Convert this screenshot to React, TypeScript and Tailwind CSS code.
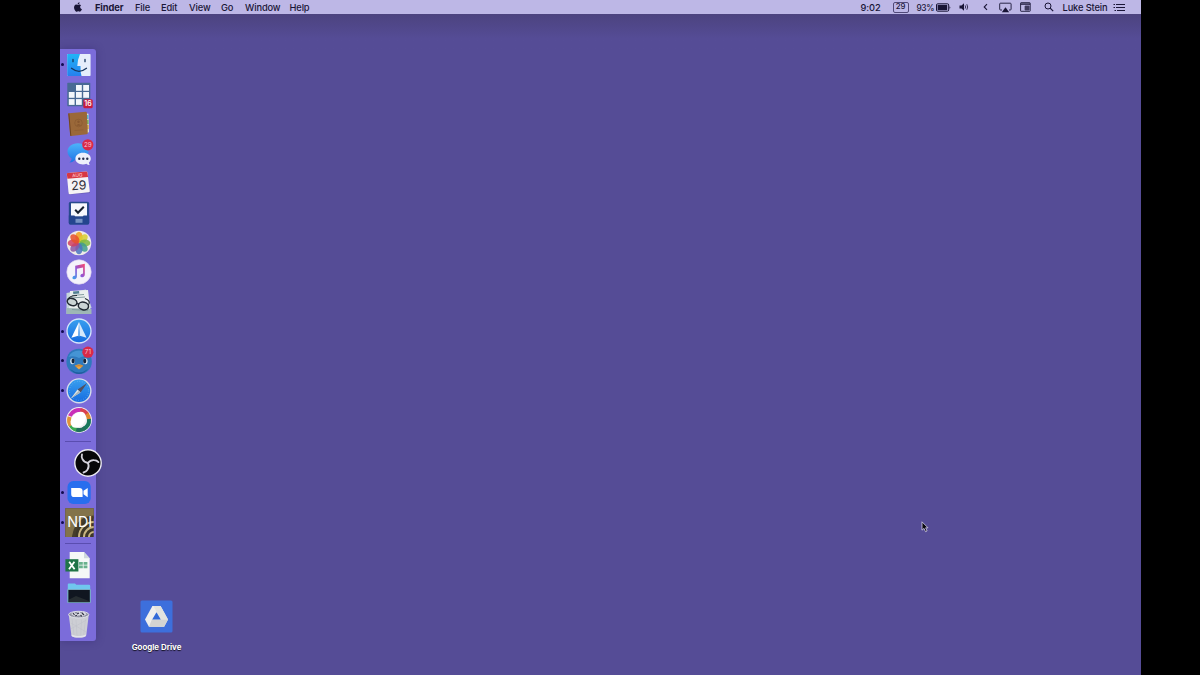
import type { ReactNode } from "react";

const FONT = "font-['Inter','Liberation_Sans',sans-serif]";

function Tile({ children, running = false }: { children: ReactNode; running?: boolean }) {
  return (
    <div className="flex h-[29.6px] shrink-0 items-center">
      <div className="flex w-1 shrink-0 justify-end">
        {running && <span className="h-[3px] w-[3px] shrink-0 rounded-full bg-[#100a50]" />}
      </div>
      <svg viewBox="0 0 30 30" className="h-[30px] w-[30px] shrink-0 overflow-visible font-['Inter',sans-serif]">
        {children}
      </svg>
    </div>
  );
}

function Divider() {
  return (
    <div className="flex h-[13.2px] shrink-0 items-center pl-[5px]">
      <div className="h-px w-[26px] bg-[#5a4db0]" />
    </div>
  );
}

function Badge({ x, y, label }: { x: number; y: number; label: string }) {
  return (
    <g>
      <circle cx={x} cy={y} r="5.6" fill="#d92a48" />
      <text x={x} y={y + 2.2} fontSize="6.3" textAnchor="middle" fill="#f6c3d3">{label}</text>
    </g>
  );
}

const petals = ["#f2a01d", "#d9cf2f", "#7cb83f", "#3f9e8e", "#4a74c0", "#8a57a6", "#d0405f", "#e8502a"];

function Dock() {
  return (
    <div className="flex h-[592px] w-9 flex-col rounded-r-[3px] bg-[#7b6cda] pt-[1.2px] shadow-[0_0_9px_rgba(45,35,110,0.4)]">
      <Tile running>
        <defs>
          <linearGradient id="finder" x1="0" y1="0" x2="0" y2="1">
            <stop offset="0" stopColor="#21b4f7" />
            <stop offset="1" stopColor="#2580ee" />
          </linearGradient>
        </defs>
        <rect x="3.2" y="4" width="23.4" height="22" rx="0.8" fill="#e6eefb" />
        <path d="M4 4H16Q13.4 10 13.3 16H16.5Q16.3 22 17.5 26H4Q3.2 26 3.2 25.2V4.8Q3.2 4 4 4Z" fill="url(#finder)" />
        <path d="M9 9.5v2.2M21 9.5v2.2M7.5 18.3Q15 24.3 22.5 18.3" fill="none" stroke="#17375f" strokeWidth="1.3" strokeLinecap="round" />
      </Tile>
      <Tile>
        <rect x="3.3" y="2.8" width="23" height="23.4" rx="0.6" fill="#486a94" />
        <g fill="#f2f7fb">
          <rect x="12" y="5" width="5.8" height="5.8" /><rect x="19.2" y="5" width="5.8" height="5.8" />
          <rect x="4.8" y="12" width="5.8" height="5.8" /><rect x="12" y="12" width="5.8" height="5.8" /><rect x="19.2" y="12" width="5.8" height="5.8" />
          <rect x="4.8" y="19.1" width="5.8" height="5.8" /><rect x="12" y="19.1" width="5.8" height="5.8" />
        </g>
        <rect x="19.3" y="19.3" width="9.4" height="9" rx="1.5" fill="#c91b3e" />
        <text x="24" y="26.3" fontSize="7" fontWeight="600" textAnchor="middle" fill="#fff">16</text>
      </Tile>
      <Tile>
        <path d="M20 4L24.5 4.8 25 23 22 25Z" fill="#dfe0c8" />
        <path d="M22 6h2.5v4H22Z" fill="#58b6d5" /><path d="M22 11h2.7v4H22Z" fill="#78bd65" /><path d="M22 16h2.8v4H22Z" fill="#d7b052" />
        <path d="M5 4.2L21.8 2.8Q22.8 2.8 22.9 3.7L23.8 24Q23.8 25 22.8 25.2L7.2 27Q6.2 27 6.1 26L4.3 5.2Q4.3 4.3 5 4.2Z" fill="#9a6839" />
        <path d="M4.8 4.4L6.8 26.9" stroke="#704522" strokeWidth="1" />
        <circle cx="14.5" cy="14" r="3.8" fill="none" stroke="#87572f" strokeWidth="0.6" />
        <circle cx="14.5" cy="12.8" r="1.2" fill="#87572f" /><path d="M12.2 16.7Q14.5 13.5 16.9 16.7Z" fill="#87572f" />
        <path d="M10.5 21.5L19.5 20.8" stroke="#87572f" strokeWidth="0.5" />
      </Tile>
      <Tile>
        <defs>
          <linearGradient id="bubble" x1="0" y1="0" x2="0" y2="1">
            <stop offset="0" stopColor="#4db4fa" />
            <stop offset="1" stopColor="#1d73e6" />
          </linearGradient>
        </defs>
        <path d="M14 4.2C7.5 4.2 3.5 8 3.5 12.5C3.5 15.6 5.2 18 7.6 19.4C7.4 21.4 6.3 22.8 5.3 23.6C8 23.5 10 22.4 11.2 20.8C19 21.6 24.5 18 24.5 12.5C24.5 8 20 4.2 14 4.2Z" fill="url(#bubble)" />
        <path d="M19 13.8C14.5 13.8 11.4 16.4 11.4 19.7C11.4 23 14.7 25.4 19 25.4C20.2 25.4 21.4 25.2 22.4 24.8Q23.9 26.3 25.8 26.1Q24.9 25 24.9 23.5C26.1 22.5 26.8 21.2 26.8 19.7C26.8 16.4 23.5 13.8 19 13.8Z" fill="#edf0fb" />
        <circle cx="15.3" cy="19.8" r="1.2" fill="#28304e" /><circle cx="19.3" cy="19.8" r="1.2" fill="#28304e" /><circle cx="23.3" cy="19.8" r="1.2" fill="#28304e" />
        <Badge x={23.8} y={5.8} label="29" />
      </Tile>
      <Tile>
        <path d="M4 24L25.5 22 26 25 5 26.5Z" fill="#55498e" opacity=".5" />
        <path d="M2.8 5.9Q2.8 5 3.8 4.9L22.2 3.5Q23.2 3.5 23.4 4.5L25.8 23Q25.8 24.2 24.8 24.3L5.8 26.2Q4.7 26.2 4.6 25.2Z" fill="#f5f3f5" />
        <path d="M2.8 5.9Q2.8 5 3.8 4.9L22.2 3.5Q23.2 3.5 23.4 4.5L24.1 9 3.4 10.7Z" fill="#d63743" />
        <text x="13.3" y="9" fontSize="4.8" fontWeight="500" textAnchor="middle" fill="#ffc6cc" transform="rotate(-4 13 8)">AUG</text>
        <text x="14.8" y="21.7" fontSize="12.4" textAnchor="middle" fill="#33313c" transform="rotate(-4 14 17)">29</text>
      </Tile>
      <Tile>
        <rect x="4.8" y="3.7" width="20.4" height="22.8" rx="1.8" fill="#284a8d" />
        <rect x="7" y="5.3" width="16" height="13" fill="#f7f8fc" />
        <path d="M4.8 17.5H10.5Q11 20 15 20T19.5 17.5H25.2V25Q25.2 26.5 23.7 26.5H6.3Q4.8 26.5 4.8 25Z" fill="#24458e" />
        <path d="M11.5 20.8h7v4h-7Z" fill="#7692c3" />
        <path d="M11.2 11.8L14 14.8 19.8 8.8" fill="none" stroke="#18212f" strokeWidth="2" />
      </Tile>
      <Tile>
        <circle cx="15" cy="15" r="12.3" fill="#eeeae8" />
        {petals.map((color, i) => (
          <ellipse key={color} cx="15" cy="9.2" rx="3.6" ry="5.5" fill={color} opacity="0.85" transform={`rotate(${i * 45} 15 15)`} />
        ))}
      </Tile>
      <Tile>
        <defs>
          <linearGradient id="note" x1="1" y1="0" x2="0" y2="1">
            <stop offset="0" stopColor="#fb4668" />
            <stop offset=".5" stopColor="#9456d5" />
            <stop offset="1" stopColor="#35a8ef" />
          </linearGradient>
        </defs>
        <circle cx="15" cy="15" r="12.2" fill="#f5f3fb" stroke="#ddd3ef" strokeWidth=".7" />
        <path d="M11.2 8.7L20.8 6.8V17.3Q20.8 20 18.3 20.2Q16.3 20.3 16.3 18.7Q16.3 17 19.1 16.5V10.5L12.9 11.8V19.3Q12.9 22 10.4 22.2Q8.4 22.3 8.4 20.7Q8.4 19 11.2 18.5Z" fill="url(#note)" />
      </Tile>
      <Tile>
        <path d="M2.5 6L22 2.5 27.6 21 2.5 27Z" fill="#c4d6da" />
        <path d="M6 4L24 3 26.5 24 5 22Z" fill="#e9eeee" />
        <path d="M2.5 21L27.5 22V27H2.5Z" fill="#9eb7b5" />
        <path d="M8 8.5l12-1M7 11l14-1M8 22.5l16 1" stroke="#839b9f" strokeWidth="1" />
        <path d="M9 4.5l6-.5.3 2.5-6 .5Z" fill="#517f91" />
        <g fill="#becacb" fillOpacity=".7" stroke="#212932" strokeWidth="1.5">
          <ellipse cx="8.1" cy="15" rx="5" ry="3.5" transform="rotate(20 8.1 15)" />
          <ellipse cx="19.4" cy="19" rx="5.2" ry="3.8" transform="rotate(12 19.4 19)" />
        </g>
        <path d="M12.8 16.8Q14 16 14.8 17.5M4 12.2Q6 8.5 13 8.5M24.3 18Q27.5 14 21 11.5" fill="none" stroke="#212932" strokeWidth="1.2" />
      </Tile>
      <Tile running>
        <defs>
          <linearGradient id="sky" x1="0" y1="0" x2="0" y2="1">
            <stop offset="0" stopColor="#39a0ef" />
            <stop offset="1" stopColor="#156be0" />
          </linearGradient>
        </defs>
        <circle cx="15" cy="15" r="12" fill="url(#sky)" stroke="#d5e5fb" strokeWidth="1.3" />
        <path d="M15 6L22.6 21.8 15.8 19.8Z" fill="#d5e8fb" /><path d="M15 6L7.4 21.8 14.2 19.8Z" fill="#fff" />
        <path d="M14.1 19.8L15 13 15.9 19.8 15 20.8Z" fill="#78b3ef" />
      </Tile>
      <Tile running>
        <path d="M15 2.8C7.5 2.8 2.4 8 2.4 15.7C2.4 23 7.4 28 15 28C22.7 28 27.8 22.8 27.8 15.7C27.8 8 22.6 2.8 15 2.8Z" fill="#2f79bd" />
        <path d="M4.5 11Q7.5 4.5 15 4.5Q22 4.5 25.5 11Q20 9 15 12Q10 9 4.5 11Z" fill="#4594d4" />
        <path d="M6 23Q15 30 24 23Q20 28 15 28T6 23Z" fill="#1f5c9f" />
        <ellipse cx="8.5" cy="15.2" rx="2.3" ry="3" fill="#d6e6f3" /><ellipse cx="21.3" cy="15.2" rx="2.3" ry="3" fill="#d6e6f3" />
        <ellipse cx="9.1" cy="15" rx="1.6" ry="2.4" fill="#12243c" /><ellipse cx="20.7" cy="15" rx="1.6" ry="2.4" fill="#12243c" />
        <path d="M10.7 19.8Q15 16.8 19.3 19.8L15 23.4Z" fill="#eca543" /><path d="M11.3 20.2Q15 19.2 18.8 20.2" stroke="#a9682a" fill="none" strokeWidth=".7" />
        <Badge x={23.9} y={6.2} label="71" />
      </Tile>
      <Tile running>
        <circle cx="15" cy="14.8" r="11.9" fill="url(#sky)" stroke="#d6dcea" strokeWidth="1.4" />
        <circle cx="15" cy="14.8" r="9.5" fill="none" stroke="#7eb9ee" strokeWidth="1" strokeDasharray=".5 2" />
        <path d="M23.2 7L16.5 16.4 13.6 13.4Z" fill="#53505f" /><path d="M6.8 22.6L13.6 13.4 16.5 16.4Z" fill="#dfe5e4" />
        <path d="M6.8 22.6L15 14.8 16.5 16.4Z" fill="#a8b6bb" />
      </Tile>
      <Tile>
        <circle cx="15" cy="15" r="12.9" fill="#f0eff3" />
        <g transform="translate(.3 0)" fill="none" strokeWidth="4">
          <path d="M5.5 11A10 10 0 0 1 18 5.6" stroke="#c92eb8" />
          <path d="M16 5.1A10 10 0 0 1 23.2 9.8" stroke="#d9414e" />
          <path d="M22.5 8.7A10 10 0 0 1 24.7 15" stroke="#e0882e" />
          <path d="M24.7 14A10 10 0 0 1 19 24" stroke="#18775b" />
          <path d="M20.5 23.2A10 10 0 0 1 10 23.8" stroke="#21705a" />
          <path d="M12 24.6A10 10 0 0 1 5.7 19" stroke="#3dac53" />
          <path d="M6.5 20.6A10 10 0 0 1 5.3 11.8" stroke="#e0923a" />
        </g>
        <ellipse cx="14.2" cy="14.8" rx="9" ry="6.5" fill="#fff" transform="rotate(-48 14.2 14.8)" />
      </Tile>
      <Divider />
      <Tile>
        <circle cx="24" cy="15" r="13.2" fill="#070708" stroke="#eceaf3" strokeWidth="1.4" />
        <g fill="none" stroke="#d4d2db" strokeWidth="1.8" strokeLinecap="round">
          {[0, 120, 240].map((angle) => (
            <path key={angle} d="M24 15Q20 14.5 18.5 11.2Q17.2 8.8 18 6.4" transform={`rotate(${angle} 24 15)`} />
          ))}
        </g>
      </Tile>
      <Tile running>
        <rect x="3.5" y="4" width="23.2" height="23" rx="5.8" fill="#286eee" />
        <path d="M7.2 11H15.3Q18.6 11 18.6 14.2V20.1H10.4Q7.2 20.1 7.2 16.9ZM19.5 13.8L23.7 10.9V20.2L19.5 17.2Z" fill="#fff" />
      </Tile>
      <Tile running>
        <defs><clipPath id="square"><rect x="1.3" y="1.3" width="28.4" height="28.7" /></clipPath></defs>
        <g clipPath="url(#square)">
          <rect x="1" y="1" width="29" height="29" fill="#3d3728" />
          <path d="M1 1H30V10Q12 12 8 30H1Z" fill="#83734a" />
          <g fill="none" stroke="#c8b582" strokeWidth="2">
            <circle cx="30" cy="30" r="5" /><circle cx="30" cy="30" r="10" />
            <circle cx="30" cy="30" r="15" /><circle cx="30" cy="30" r="20" stroke="#453d2a" strokeWidth="3" />
          </g>
        </g>
        <text x="3.2" y="19.6" fontSize="14" textLength="25" lengthAdjust="spacingAndGlyphs" fill="#fff">NDI</text>
      </Tile>
      <Divider />
      <Tile>
        <path d="M5.7 2H20L25.7 8.2V28.3H5.7Z" fill="#f5f8f7" /><path d="M20 2V8.2H25.7Z" fill="#cfd7dc" />
        <g fill="#6ab28e"><path d="M15 12h3.8v2.7H15ZM19.6 12h3.8v2.7h-3.8ZM15 15.5h3.8v2.7H15ZM19.6 15.5h3.8v2.7h-3.8Z" /></g>
        <rect x="1.4" y="9.2" width="13" height="12.3" fill="#207447" />
        <path d="M5.2 11.8L10.6 19.2M10.4 11.8L5 19.2" stroke="#fff" strokeWidth="1.8" />
      </Tile>
      <Tile>
        <path d="M3.8 8V5.3Q3.8 4.5 4.7 4.5H11L12.3 5.8H25Q26.2 5.8 26.2 6.8V20H3.8Z" fill="#70c7ee" />
        <rect x="3.2" y="10" width="23.7" height="14" rx=".8" fill="#78adc4" />
        <rect x="4.4" y="11" width="21.4" height="12.2" fill="#101620" />
        <path d="M5 20.5L12 17 25 22V23H5Z" fill="#252c30" />
      </Tile>
      <Tile>
        <path d="M4.7 5.5H24.8L22.3 26.3Q22 28.6 14.8 28.6T7.4 26.3Z" fill="#cdced4" />
        <ellipse cx="14.7" cy="5.6" rx="10.1" ry="3.3" fill="#8f91a0" stroke="#e7e6ee" strokeWidth=".9" />
        <path d="M7 5L10 2.5 12 5 15 2 17 4.6 20 2.5 22.5 5.3 19 7.6 15 6.2 11 7.8Z" fill="#dcdce5" />
        <path d="M9 4l1.5 2M13 5l2-1M18 4l2 2M11 7l2-.8M16.5 6l1.3 1.3" stroke="#343444" strokeWidth="1.2" />
        <path d="M8 10L10 26M12 10.5L13 27M17.5 10.5L16.7 27M21.5 10L19.7 26M7 14L22 23M6.7 20L22.5 11" stroke="#bfc0c8" strokeWidth=".5" />
        <path d="M7.6 25.4Q14.8 28.5 22 25.4L21.8 27Q20 28.6 14.8 28.6T7.6 27Z" fill="#e4e4e9" />
      </Tile>
    </div>
  );
}

function MenuBar() {
  return (
    <header className="flex h-3.5 shrink-0 items-center bg-[#bdb7e6] text-[9.3px] leading-[14px] font-medium whitespace-nowrap text-[#191536]">
      <svg viewBox="0 0 24 24" className="ml-[12.5px] h-[11.5px] w-[11.5px] shrink-0" fill="currentColor">
        <path d="M17 12.6C17 10.3 18.8 9.2 19 9.1C17.9 7.5 16.3 7.3 15.7 7.3C14.3 7.1 13 8.1 12.3 8.1C11.5 8.1 10.4 7.3 9.1 7.3C7.5 7.4 6 8.3 5.1 9.7C3.3 12.7 4.6 17.3 6.4 19.8C7.2 21 8.3 22.5 9.6 22.4C10.9 22.4 11.4 21.6 12.9 21.6S14.8 22.4 16.2 22.4C17.6 22.4 18.5 21.1 19.3 19.9C20.2 18.5 20.6 17.2 20.7 17.1C20.7 17.1 17 15.8 17 12.6ZM14.7 5.7C15.4 4.9 15.8 3.8 15.7 2.4C14.7 2.5 13.5 3.1 12.7 4C12 4.8 11.5 5.9 11.6 7.2C12.7 7.2 13.9 6.5 14.7 5.7Z" />
      </svg>
      <nav className="ml-[11.5px] flex pt-px tracking-[-0.12px]">
        <span className="w-10 font-bold tracking-[-0.1px]">Finder</span>
        <span className="w-[26px]">File</span>
        <span className="w-7">Edit</span>
        <span className="w-8">View</span>
        <span className="w-6">Go</span>
        <span className="w-[44.5px]">Window</span>
        <span>Help</span>
      </nav>
      <div className="ml-auto flex h-full w-[280px] shrink-0 items-center">
        <span className="w-8 pt-px tracking-[-0.1px]">9:02</span>
        <span className="flex h-[11px] w-4 items-center justify-center rounded-[2px] border border-[#514a78] text-[7.8px] leading-none">29</span>
        <span className="ml-2 w-[19px] pt-px text-[8.3px] tracking-[-0.4px]">93%</span>
        <svg viewBox="0 0 15 9" className="h-[9px] w-[15px]">
          <rect x=".5" y=".8" width="12.2" height="7.4" rx="1.2" fill="none" stroke="currentColor" />
          <rect x="1.6" y="1.9" width="9.6" height="5.2" fill="currentColor" /><path d="M13.5 3.2Q15.2 4.5 13.5 5.8Z" fill="currentColor" />
        </svg>
        <svg viewBox="0 0 10 10" className="ml-2 h-2.5 w-2.5" fill="none" stroke="currentColor">
          <path d="M0.5 3.5H2.5L5 1.3V8.7L2.5 6.5H.5Z" fill="currentColor" stroke="none" />
          <path d="M6.2 3.4Q7.2 5 6.2 6.6M7.8 2.2Q9.6 5 7.8 7.8" strokeWidth=".8" />
        </svg>
        <svg viewBox="0 0 5 8" className="ml-[14px] h-2 w-[5px]" fill="none" stroke="currentColor"><path d="M4 1.2L1.2 4 4 6.8" strokeWidth="1.1" /></svg>
        <svg viewBox="0 0 13 11" className="ml-[11px] h-[11px] w-[13px]">
          <path d="M3 8H1.5Q.7 8 .7 7.2V2Q.7 1.2 1.5 1.2H11.3Q12.1 1.2 12.1 2V7.2Q12.1 8 11.3 8H10" fill="none" stroke="currentColor" strokeWidth=".9" />
          <path d="M6.5 5.3L10.2 10.3H2.8Z" fill="currentColor" />
        </svg>
        <svg viewBox="0 0 11 10" className="ml-2 h-2.5 w-[11px]" fill="none" stroke="currentColor">
          <rect x=".6" y=".7" width="9.6" height="8.6" rx=".5" strokeWidth=".9" /><path d="M.6 2.1H10.2" strokeWidth="1.3" />
          <path d="M5.1 4H9V8H5.1ZM7 4V8M5.1 6H9" strokeWidth=".7" fill="currentColor" fillOpacity=".45" />
        </svg>
        <svg viewBox="0 0 10 10" className="ml-[13px] h-2.5 w-2.5" fill="none" stroke="currentColor"><circle cx="4" cy="4" r="3" /><path d="M6.2 6.2L9.2 9.2" strokeWidth="1.2" /></svg>
        <span className="ml-[9px] w-[50px] pt-px tracking-[-0.12px]">Luke Stein</span>
        <svg viewBox="0 0 13 9" className="h-[9px] w-[13px] shrink-0" stroke="currentColor"><path d="M.5 1.5H2M3 1.5H12M.5 4.5H2M3 4.5H12M1.5 7.5H3M4 7.5H12" strokeWidth="1.1" /></svg>
      </div>
    </header>
  );
}

export default function App() {
  return (
    <div className={`flex h-[675px] w-[1200px] justify-center overflow-hidden bg-black ${FONT}`}>
      <div className="relative flex w-[1081px] flex-col overflow-hidden bg-[#554c96]">
        <MenuBar />
        <div className="h-[35px] shrink-0 bg-linear-to-b from-[#4c437f] to-[#554c96] to-70%" />
        <Dock />
        <div className="absolute top-[600px] left-[59.5px] flex w-[75px] flex-col items-center">
          <svg viewBox="0 0 33 33" className="h-[33px] w-[33px]">
            <rect x=".5" y=".5" width="32" height="32" rx="1.5" fill="#3d6fdc" />
            <path d="M12.4 6H20.6L28 19.6 24.1 26.8H8.9L5 19.6Z" fill="#efefed" />
            <path d="M20.6 6L28 19.6H21L13.3 6Z" fill="#e2e3df" />
            <path d="M11.9 19.6H28L24.1 26.8H8.9Z" fill="#d3d4d2" />
            <path d="M16.5 12.2L20.8 19.6H12.2Z" fill="#326ad7" />
          </svg>
          <span className="mt-[7.5px] text-[7.9px] leading-3 font-bold whitespace-nowrap text-white [text-shadow:0_1px_1px_rgba(0,0,0,0.8)]">Google Drive</span>
        </div>
        <svg viewBox="0 0 8 12" className="absolute top-[520.5px] left-[861px] h-3 w-2 overflow-visible">
          <path d="M1 .8V9.2L3 7.4 4.5 10.7 6.1 10 4.6 6.8H7Z" fill="#09080d" stroke="#d7d2ed" strokeWidth=".8" />
        </svg>
      </div>
    </div>
  );
}
